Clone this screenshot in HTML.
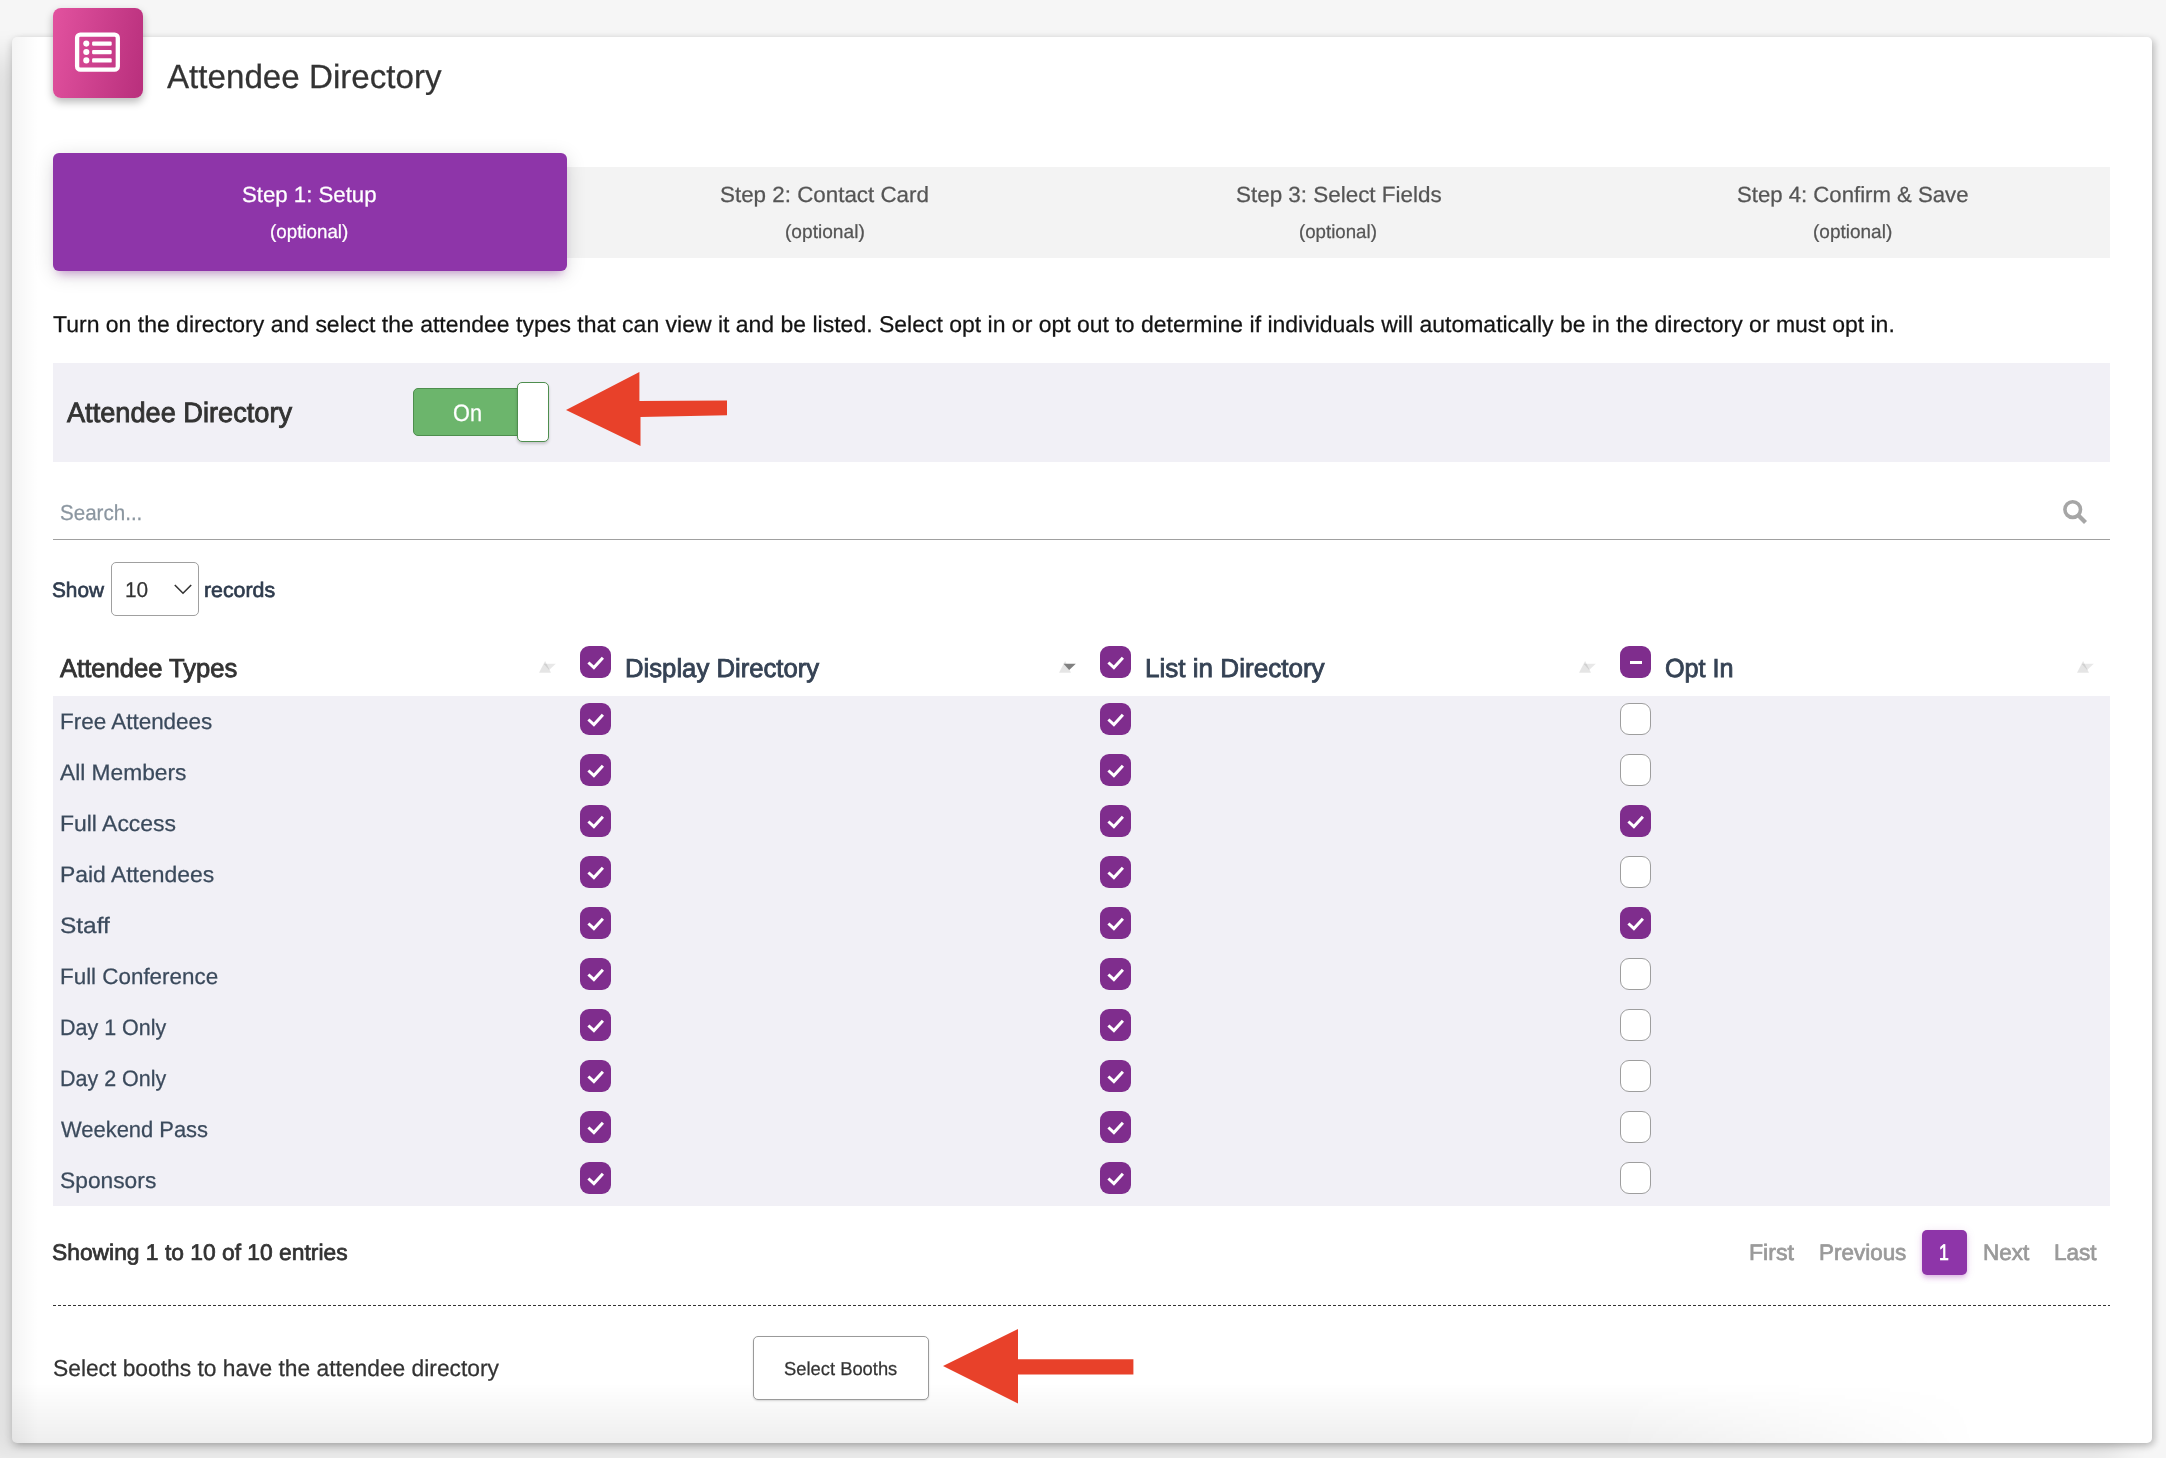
<!DOCTYPE html>
<html><head><meta charset="utf-8"><title>Attendee Directory</title>
<style>
html,body{margin:0;padding:0;}
body{width:2166px;height:1458px;overflow:hidden;position:relative;background:#f6f6f6;font-family:"Liberation Sans",sans-serif;}
.abs{position:absolute;}
.t{position:absolute;white-space:nowrap;transform-origin:0 0;text-rendering:geometricPrecision;}
#card{position:absolute;left:12px;top:37px;width:2140px;height:1406px;background:#fff;border-radius:5px;
 box-shadow:0 3px 8px rgba(0,0,0,0.20),-30px 18px 30px rgba(0,0,0,0.09),4px 2px 6px rgba(0,0,0,0.10);}
#cardgrad{position:absolute;left:12px;top:37px;width:2140px;height:1406px;border-radius:5px;overflow:hidden;}
#cardgrad:before{content:"";position:absolute;left:0;top:0;width:100%;height:100%;background:linear-gradient(to right,rgba(0,0,0,0.045) 0,rgba(0,0,0,0) 26px);}
#cardgrad:after{content:"";position:absolute;left:0;bottom:0;width:100%;height:60px;background:linear-gradient(to top,rgba(0,0,0,0.065) 0,rgba(0,0,0,0) 60px);-webkit-mask-image:linear-gradient(to right,#000 0,#000 75%,transparent 92%);mask-image:linear-gradient(to right,#000 0,#000 75%,transparent 92%);}
#icon{position:absolute;left:53px;top:8px;width:90px;height:90px;border-radius:8px;background:linear-gradient(100deg,#e2529f 0%,#b82f7c 100%);box-shadow:0 4px 9px rgba(0,0,0,0.28);}
#tabs{position:absolute;left:53px;top:167px;width:2057px;height:91px;background:#f3f3f3;}
#tab1{position:absolute;left:53px;top:153px;width:514px;height:118px;border-radius:6px;background:#8e35a9;box-shadow:0 4px 20px 0 rgba(0,0,0,0.14),0 7px 10px -5px rgba(156,39,176,0.4);}
#tsec{position:absolute;left:53px;top:363px;width:2057px;height:99px;background:#f1f0f6;}
#tg{position:absolute;left:413px;top:388px;width:110px;height:46px;border:1px solid #4e8e4e;border-radius:5px;background:#6cb56c;box-sizing:content-box;}
#th{position:absolute;left:517px;top:382px;width:30px;height:58px;border:1px solid #4e8e4e;border-radius:5px;background:#fff;box-shadow:0 2px 3px rgba(0,0,0,0.18);}
#uline{position:absolute;left:53px;top:539px;width:2057px;height:1px;background:#a0a0a0;}
#sel{position:absolute;left:111px;top:562px;width:86px;height:52px;border:1px solid #a0a0a0;border-radius:5px;background:#fff;}
#tbody{position:absolute;left:53px;top:696px;width:2057px;height:510px;background:#f1f0f6;}
.cb{position:absolute;width:31px;height:32px;border-radius:9px;box-sizing:border-box;}
.cb.on{background:#7f2d8d;}
.cb.on svg{position:absolute;left:0;top:0;}
.cb.off{background:#fff;border:1.3px solid #9e9e9e;}
#pgbox{position:absolute;left:1922px;top:1230px;width:45px;height:45px;border-radius:5px;background:#8e35a9;box-shadow:0 4px 5px 0 rgba(156,39,176,.14),0 1px 10px 0 rgba(156,39,176,.12),0 2px 4px -1px rgba(156,39,176,.2);}
#dash{position:absolute;left:53px;top:1305px;width:2057px;height:1px;background:linear-gradient(to right,#333 0,#333 3px,transparent 3px,transparent 5px);background-size:5px 1px;}
#btnb{position:absolute;left:753px;top:1336px;width:174px;height:62px;border:1px solid #9a9a9a;border-radius:5px;background:#fff;box-shadow:0 1px 2px rgba(0,0,0,0.15);}
</style></head><body>
<div id="card"></div>
<div id="cardgrad"></div>
<div id="icon"><svg width="90" height="90" viewBox="0 0 90 90" style="position:absolute;left:0;top:0">
<rect x="24.1" y="26.6" width="40.7" height="35.1" rx="3.2" fill="none" stroke="#fff" stroke-width="4.3"/>
<circle cx="33.3" cy="35.6" r="3.05" fill="#fff"/><circle cx="33.3" cy="44" r="3.05" fill="#fff"/><circle cx="33.3" cy="52.4" r="3.05" fill="#fff"/>
<rect x="39.1" y="33.5" width="19.6" height="4.3" rx="1.2" fill="#fff"/><rect x="39.1" y="41.9" width="19.6" height="4.3" rx="1.2" fill="#fff"/><rect x="39.1" y="50.3" width="19.6" height="4.3" rx="1.2" fill="#fff"/>
</svg></div>
<div id="tabs"></div>
<div id="tab1"></div>
<div id="tsec"></div>
<div id="tg"></div>
<div id="th"></div>
<svg class="abs" style="left:560px;top:365px" width="175" height="90" viewBox="560 365 175 90"><polygon points="566,410 639.4,372 639.4,401 727,400.5 727,415.3 640.5,417 640.5,446" fill="#e8412a"/></svg>
<div id="uline"></div>
<svg class="abs" style="left:2058px;top:495px" width="36" height="36" viewBox="2058 495 36 36"><circle cx="2072.7" cy="509.6" r="7.8" fill="none" stroke="#a6a6a6" stroke-width="3.6"/><line x1="2078.5" y1="515.5" x2="2085.5" y2="522.5" stroke="#a6a6a6" stroke-width="4.2"/></svg>
<div id="sel"></div>
<svg class="abs" style="left:170px;top:580px" width="26" height="18" viewBox="170 580 26 18"><polyline points="174.8,585 183,593.2 191.2,585" fill="none" stroke="#333" stroke-width="1.6"/></svg>
<div id="tbody"></div>
<svg class="abs" style="left:539.4px;top:660px" width="20" height="16" viewBox="0 0 20 16"><polygon points="0,12.7 6.1,1 12,12.7" fill="rgba(0,0,0,0.10)"/><polygon points="4.5,3.7 16.8,3.7 10.2,9.9" fill="rgba(0,0,0,0.09)"/></svg>
<svg class="abs" style="left:1059.1px;top:660px" width="20" height="16" viewBox="0 0 20 16"><polygon points="0,12.7 6.1,1 12,12.7" fill="rgba(0,0,0,0.10)"/><polygon points="4.5,3.7 16.8,3.7 10.2,9.9" fill="#808080"/></svg>
<svg class="abs" style="left:1579.1px;top:660px" width="20" height="16" viewBox="0 0 20 16"><polygon points="0,12.7 6.1,1 12,12.7" fill="rgba(0,0,0,0.10)"/><polygon points="4.5,3.7 16.8,3.7 10.2,9.9" fill="rgba(0,0,0,0.09)"/></svg>
<svg class="abs" style="left:2076.6px;top:660px" width="20" height="16" viewBox="0 0 20 16"><polygon points="0,12.7 6.1,1 12,12.7" fill="rgba(0,0,0,0.10)"/><polygon points="4.5,3.7 16.8,3.7 10.2,9.9" fill="rgba(0,0,0,0.09)"/></svg>
<div class="cb on" style="left:580px;top:646px"><svg width="31" height="32" viewBox="0 0 31 32"><path d="M8.4 16.5 L13.9 21.6 L22.9 11.8" fill="none" stroke="#fff" stroke-width="3.0" stroke-linecap="butt" stroke-linejoin="miter"/></svg></div><div class="cb on" style="left:1100px;top:646px"><svg width="31" height="32" viewBox="0 0 31 32"><path d="M8.4 16.5 L13.9 21.6 L22.9 11.8" fill="none" stroke="#fff" stroke-width="3.0" stroke-linecap="butt" stroke-linejoin="miter"/></svg></div><div class="cb on" style="left:1620px;top:646px"><div style="position:absolute;left:10px;top:15px;width:12px;height:3px;background:#fff"></div></div><div class="cb on" style="left:580px;top:703px"><svg width="31" height="32" viewBox="0 0 31 32"><path d="M8.4 16.5 L13.9 21.6 L22.9 11.8" fill="none" stroke="#fff" stroke-width="3.0" stroke-linecap="butt" stroke-linejoin="miter"/></svg></div><div class="cb on" style="left:1100px;top:703px"><svg width="31" height="32" viewBox="0 0 31 32"><path d="M8.4 16.5 L13.9 21.6 L22.9 11.8" fill="none" stroke="#fff" stroke-width="3.0" stroke-linecap="butt" stroke-linejoin="miter"/></svg></div><div class="cb off" style="left:1620px;top:703px"></div><div class="cb on" style="left:580px;top:754px"><svg width="31" height="32" viewBox="0 0 31 32"><path d="M8.4 16.5 L13.9 21.6 L22.9 11.8" fill="none" stroke="#fff" stroke-width="3.0" stroke-linecap="butt" stroke-linejoin="miter"/></svg></div><div class="cb on" style="left:1100px;top:754px"><svg width="31" height="32" viewBox="0 0 31 32"><path d="M8.4 16.5 L13.9 21.6 L22.9 11.8" fill="none" stroke="#fff" stroke-width="3.0" stroke-linecap="butt" stroke-linejoin="miter"/></svg></div><div class="cb off" style="left:1620px;top:754px"></div><div class="cb on" style="left:580px;top:805px"><svg width="31" height="32" viewBox="0 0 31 32"><path d="M8.4 16.5 L13.9 21.6 L22.9 11.8" fill="none" stroke="#fff" stroke-width="3.0" stroke-linecap="butt" stroke-linejoin="miter"/></svg></div><div class="cb on" style="left:1100px;top:805px"><svg width="31" height="32" viewBox="0 0 31 32"><path d="M8.4 16.5 L13.9 21.6 L22.9 11.8" fill="none" stroke="#fff" stroke-width="3.0" stroke-linecap="butt" stroke-linejoin="miter"/></svg></div><div class="cb on" style="left:1620px;top:805px"><svg width="31" height="32" viewBox="0 0 31 32"><path d="M8.4 16.5 L13.9 21.6 L22.9 11.8" fill="none" stroke="#fff" stroke-width="3.0" stroke-linecap="butt" stroke-linejoin="miter"/></svg></div><div class="cb on" style="left:580px;top:856px"><svg width="31" height="32" viewBox="0 0 31 32"><path d="M8.4 16.5 L13.9 21.6 L22.9 11.8" fill="none" stroke="#fff" stroke-width="3.0" stroke-linecap="butt" stroke-linejoin="miter"/></svg></div><div class="cb on" style="left:1100px;top:856px"><svg width="31" height="32" viewBox="0 0 31 32"><path d="M8.4 16.5 L13.9 21.6 L22.9 11.8" fill="none" stroke="#fff" stroke-width="3.0" stroke-linecap="butt" stroke-linejoin="miter"/></svg></div><div class="cb off" style="left:1620px;top:856px"></div><div class="cb on" style="left:580px;top:907px"><svg width="31" height="32" viewBox="0 0 31 32"><path d="M8.4 16.5 L13.9 21.6 L22.9 11.8" fill="none" stroke="#fff" stroke-width="3.0" stroke-linecap="butt" stroke-linejoin="miter"/></svg></div><div class="cb on" style="left:1100px;top:907px"><svg width="31" height="32" viewBox="0 0 31 32"><path d="M8.4 16.5 L13.9 21.6 L22.9 11.8" fill="none" stroke="#fff" stroke-width="3.0" stroke-linecap="butt" stroke-linejoin="miter"/></svg></div><div class="cb on" style="left:1620px;top:907px"><svg width="31" height="32" viewBox="0 0 31 32"><path d="M8.4 16.5 L13.9 21.6 L22.9 11.8" fill="none" stroke="#fff" stroke-width="3.0" stroke-linecap="butt" stroke-linejoin="miter"/></svg></div><div class="cb on" style="left:580px;top:958px"><svg width="31" height="32" viewBox="0 0 31 32"><path d="M8.4 16.5 L13.9 21.6 L22.9 11.8" fill="none" stroke="#fff" stroke-width="3.0" stroke-linecap="butt" stroke-linejoin="miter"/></svg></div><div class="cb on" style="left:1100px;top:958px"><svg width="31" height="32" viewBox="0 0 31 32"><path d="M8.4 16.5 L13.9 21.6 L22.9 11.8" fill="none" stroke="#fff" stroke-width="3.0" stroke-linecap="butt" stroke-linejoin="miter"/></svg></div><div class="cb off" style="left:1620px;top:958px"></div><div class="cb on" style="left:580px;top:1009px"><svg width="31" height="32" viewBox="0 0 31 32"><path d="M8.4 16.5 L13.9 21.6 L22.9 11.8" fill="none" stroke="#fff" stroke-width="3.0" stroke-linecap="butt" stroke-linejoin="miter"/></svg></div><div class="cb on" style="left:1100px;top:1009px"><svg width="31" height="32" viewBox="0 0 31 32"><path d="M8.4 16.5 L13.9 21.6 L22.9 11.8" fill="none" stroke="#fff" stroke-width="3.0" stroke-linecap="butt" stroke-linejoin="miter"/></svg></div><div class="cb off" style="left:1620px;top:1009px"></div><div class="cb on" style="left:580px;top:1060px"><svg width="31" height="32" viewBox="0 0 31 32"><path d="M8.4 16.5 L13.9 21.6 L22.9 11.8" fill="none" stroke="#fff" stroke-width="3.0" stroke-linecap="butt" stroke-linejoin="miter"/></svg></div><div class="cb on" style="left:1100px;top:1060px"><svg width="31" height="32" viewBox="0 0 31 32"><path d="M8.4 16.5 L13.9 21.6 L22.9 11.8" fill="none" stroke="#fff" stroke-width="3.0" stroke-linecap="butt" stroke-linejoin="miter"/></svg></div><div class="cb off" style="left:1620px;top:1060px"></div><div class="cb on" style="left:580px;top:1111px"><svg width="31" height="32" viewBox="0 0 31 32"><path d="M8.4 16.5 L13.9 21.6 L22.9 11.8" fill="none" stroke="#fff" stroke-width="3.0" stroke-linecap="butt" stroke-linejoin="miter"/></svg></div><div class="cb on" style="left:1100px;top:1111px"><svg width="31" height="32" viewBox="0 0 31 32"><path d="M8.4 16.5 L13.9 21.6 L22.9 11.8" fill="none" stroke="#fff" stroke-width="3.0" stroke-linecap="butt" stroke-linejoin="miter"/></svg></div><div class="cb off" style="left:1620px;top:1111px"></div><div class="cb on" style="left:580px;top:1162px"><svg width="31" height="32" viewBox="0 0 31 32"><path d="M8.4 16.5 L13.9 21.6 L22.9 11.8" fill="none" stroke="#fff" stroke-width="3.0" stroke-linecap="butt" stroke-linejoin="miter"/></svg></div><div class="cb on" style="left:1100px;top:1162px"><svg width="31" height="32" viewBox="0 0 31 32"><path d="M8.4 16.5 L13.9 21.6 L22.9 11.8" fill="none" stroke="#fff" stroke-width="3.0" stroke-linecap="butt" stroke-linejoin="miter"/></svg></div><div class="cb off" style="left:1620px;top:1162px"></div>
<div id="pgbox"></div>
<div id="dash"></div>
<div id="btnb"></div>
<svg class="abs" style="left:935px;top:1325px" width="205" height="85" viewBox="935 1325 205 85"><polygon points="943,1366 1018,1329 1018,1359.2 1133.4,1359.2 1133.4,1374.5 1018,1374.5 1018,1403.5" fill="#e8412a"/></svg>
<div class="t" id="title" style="left:167.00px;top:61.04px;font-size:33.60px;line-height:33.60px;font-weight:400;color:#333333;-webkit-text-stroke:0.25px currentColor;transform:scaleX(0.9876)">Attendee Directory</div>
<div class="t" id="s1" style="left:242.00px;top:183.93px;font-size:22.00px;line-height:22.00px;font-weight:400;color:#ffffff;-webkit-text-stroke:0.25px currentColor;transform:scaleX(1.0094)">Step 1: Setup</div>
<div class="t" id="s2" style="left:719.50px;top:183.93px;font-size:22.00px;line-height:22.00px;font-weight:400;color:#555555;-webkit-text-stroke:0.25px currentColor;transform:scaleX(1.0171)">Step 2: Contact Card</div>
<div class="t" id="s3" style="left:1235.50px;top:183.93px;font-size:22.00px;line-height:22.00px;font-weight:400;color:#555555;-webkit-text-stroke:0.25px currentColor;transform:scaleX(1.0192)">Step 3: Select Fields</div>
<div class="t" id="s4" style="left:1736.50px;top:183.93px;font-size:22.00px;line-height:22.00px;font-weight:400;color:#555555;-webkit-text-stroke:0.25px currentColor;transform:scaleX(1.0068)">Step 4: Confirm &amp; Save</div>
<div class="t" id="para" style="left:53.00px;top:313.08px;font-size:22.80px;line-height:22.80px;font-weight:400;color:#141414;-webkit-text-stroke:0.25px currentColor;transform:scaleX(1.0084)">Turn on the directory and select the attendee types that can view it and be listed. Select opt in or opt out to determine if individuals will automatically be in the directory or must opt in.</div>
<div class="t" id="tlabel" style="left:67.00px;top:398.51px;font-size:27.90px;line-height:27.90px;font-weight:400;color:#333333;-webkit-text-stroke:0.89px currentColor;transform:scaleX(0.9743)">Attendee Directory</div>
<div class="t" id="on" style="left:453.00px;top:402.03px;font-size:23.80px;line-height:23.80px;font-weight:400;color:#ffffff;-webkit-text-stroke:0.25px currentColor;transform:scaleX(0.9119)">On</div>
<div class="t" id="search" style="left:60.00px;top:501.82px;font-size:21.60px;line-height:21.60px;font-weight:400;color:#8b96a0;-webkit-text-stroke:0.25px currentColor;transform:scaleX(0.9526)">Search...</div>
<div class="t" id="show" style="left:52.00px;top:580.88px;font-size:20.90px;line-height:20.90px;font-weight:400;color:#2e3b4d;-webkit-text-stroke:0.67px currentColor;transform:scaleX(0.9956)">Show</div>
<div class="t" id="records" style="left:204.00px;top:580.88px;font-size:20.90px;line-height:20.90px;font-weight:400;color:#2e3b4d;-webkit-text-stroke:0.67px currentColor;transform:scaleX(1.0206)">records</div>
<div class="t" id="ten" style="left:124.50px;top:580.02px;font-size:21.40px;line-height:21.40px;font-weight:400;color:#333333;-webkit-text-stroke:0.25px currentColor;transform:scaleX(0.9744)">10</div>
<div class="t" id="th1" style="left:60.00px;top:655.00px;font-size:26.10px;line-height:26.10px;font-weight:400;color:#333333;-webkit-text-stroke:0.84px currentColor;transform:scaleX(0.9807)">Attendee Types</div>
<div class="t" id="th2" style="left:624.50px;top:654.88px;font-size:26.10px;line-height:26.10px;font-weight:400;color:#354254;-webkit-text-stroke:0.84px currentColor;transform:scaleX(0.9847)">Display Directory</div>
<div class="t" id="th3" style="left:1144.50px;top:654.88px;font-size:26.10px;line-height:26.10px;font-weight:400;color:#354254;-webkit-text-stroke:0.84px currentColor;transform:scaleX(0.9990)">List in Directory</div>
<div class="t" id="th4" style="left:1664.50px;top:655.27px;font-size:26.10px;line-height:26.10px;font-weight:400;color:#354254;-webkit-text-stroke:0.84px currentColor;transform:scaleX(0.9657)">Opt In</div>
<div class="t" id="showing" style="left:52.00px;top:1242.08px;font-size:22.60px;line-height:22.60px;font-weight:400;color:#333333;-webkit-text-stroke:0.72px currentColor;transform:scaleX(1.0100)">Showing 1 to 10 of 10 entries</div>
<div class="t" id="first" style="left:1748.50px;top:1242.06px;font-size:22.40px;line-height:22.40px;font-weight:400;color:#9a9a9a;-webkit-text-stroke:0.72px currentColor;transform:scaleX(1.0311)">First</div>
<div class="t" id="prev" style="left:1819.00px;top:1242.06px;font-size:22.40px;line-height:22.40px;font-weight:400;color:#9a9a9a;-webkit-text-stroke:0.72px currentColor;transform:scaleX(1.0026)">Previous</div>
<div class="t" id="pg1" style="left:1938.59px;top:1242.06px;font-size:22.40px;line-height:22.40px;font-weight:400;color:#ffffff;-webkit-text-stroke:0.72px currentColor;transform:scaleX(0.7899)">1</div>
<div class="t" id="next" style="left:1982.50px;top:1242.06px;font-size:22.40px;line-height:22.40px;font-weight:400;color:#9a9a9a;-webkit-text-stroke:0.72px currentColor;transform:scaleX(1.0036)">Next</div>
<div class="t" id="last" style="left:2053.50px;top:1242.06px;font-size:22.40px;line-height:22.40px;font-weight:400;color:#9a9a9a;-webkit-text-stroke:0.72px currentColor;transform:scaleX(1.0050)">Last</div>
<div class="t" id="bottom" style="left:52.50px;top:1356.95px;font-size:23.10px;line-height:23.10px;font-weight:400;color:#333333;-webkit-text-stroke:0.25px currentColor;transform:scaleX(0.9869)">Select booths to have the attendee directory</div>
<div class="t" id="btn" style="left:784.00px;top:1360.01px;font-size:18.70px;line-height:18.70px;font-weight:400;color:#333333;-webkit-text-stroke:0.25px currentColor;transform:scaleX(0.9826)">Select Booths</div>
<div class="t" id="r0" style="left:59.60px;top:710.97px;font-size:22.35px;line-height:22.35px;font-weight:400;color:#3b4a5c;-webkit-text-stroke:0.25px currentColor;transform:scaleX(1.0052)">Free Attendees</div>
<div class="t" id="r1" style="left:59.60px;top:761.97px;font-size:22.35px;line-height:22.35px;font-weight:400;color:#3b4a5c;-webkit-text-stroke:0.25px currentColor;transform:scaleX(1.0187)">All Members</div>
<div class="t" id="r2" style="left:59.60px;top:812.97px;font-size:22.35px;line-height:22.35px;font-weight:400;color:#3b4a5c;-webkit-text-stroke:0.25px currentColor;transform:scaleX(1.0268)">Full Access</div>
<div class="t" id="r3" style="left:59.60px;top:863.97px;font-size:22.35px;line-height:22.35px;font-weight:400;color:#3b4a5c;-webkit-text-stroke:0.25px currentColor;transform:scaleX(1.0254)">Paid Attendees</div>
<div class="t" id="r4" style="left:59.60px;top:914.97px;font-size:22.35px;line-height:22.35px;font-weight:400;color:#3b4a5c;-webkit-text-stroke:0.25px currentColor;transform:scaleX(1.0937)">Staff</div>
<div class="t" id="r5" style="left:59.60px;top:965.97px;font-size:22.35px;line-height:22.35px;font-weight:400;color:#3b4a5c;-webkit-text-stroke:0.25px currentColor;transform:scaleX(1.0023)">Full Conference</div>
<div class="t" id="r6" style="left:59.60px;top:1016.97px;font-size:22.35px;line-height:22.35px;font-weight:400;color:#3b4a5c;-webkit-text-stroke:0.25px currentColor;transform:scaleX(0.9614)">Day 1 Only</div>
<div class="t" id="r7" style="left:59.60px;top:1067.97px;font-size:22.35px;line-height:22.35px;font-weight:400;color:#3b4a5c;-webkit-text-stroke:0.25px currentColor;transform:scaleX(0.9614)">Day 2 Only</div>
<div class="t" id="r8" style="left:60.60px;top:1118.97px;font-size:22.35px;line-height:22.35px;font-weight:400;color:#3b4a5c;-webkit-text-stroke:0.25px currentColor;transform:scaleX(0.9811)">Weekend Pass</div>
<div class="t" id="r9" style="left:59.60px;top:1169.97px;font-size:22.35px;line-height:22.35px;font-weight:400;color:#3b4a5c;-webkit-text-stroke:0.25px currentColor;transform:scaleX(1.0200)">Sponsors</div>
<div class="t" id="o0" style="left:270.00px;top:222.89px;font-size:19.00px;line-height:19.00px;font-weight:400;color:#ffffff;-webkit-text-stroke:0.25px currentColor;transform:scaleX(0.9880)">(optional)</div>
<div class="t" id="o1" style="left:784.50px;top:222.89px;font-size:19.00px;line-height:19.00px;font-weight:400;color:#555555;-webkit-text-stroke:0.25px currentColor;transform:scaleX(1.0073)">(optional)</div>
<div class="t" id="o2" style="left:1299.00px;top:222.89px;font-size:19.00px;line-height:19.00px;font-weight:400;color:#555555;-webkit-text-stroke:0.25px currentColor;transform:scaleX(0.9831)">(optional)</div>
<div class="t" id="o3" style="left:1812.50px;top:222.89px;font-size:19.00px;line-height:19.00px;font-weight:400;color:#555555;-webkit-text-stroke:0.25px currentColor;transform:scaleX(1.0004)">(optional)</div>
</body></html>
